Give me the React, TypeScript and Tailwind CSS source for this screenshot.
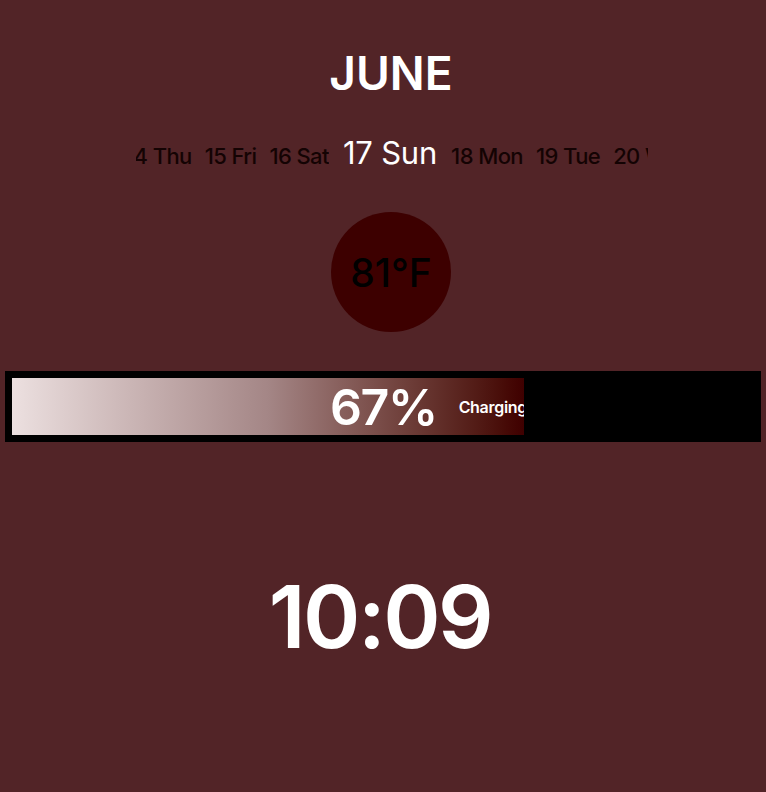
import React from 'react';

const before = [
  { n: 14, d: 'Thu' },
  { n: 15, d: 'Fri' },
  { n: 16, d: 'Sat' },
];

const after = [
  { n: 18, d: 'Mon' },
  { n: 19, d: 'Tue' },
  { n: 20, d: 'Wed' },
];

const Day: React.FC<{ n: number; d: string }> = ({ n, d }) => (
  <span className="text-[22px] leading-none font-medium tracking-[-0.6px] text-[#140303]">
    {n} {d}
  </span>
);

const App: React.FC = () => {
  return (
    <div
      className="min-h-screen w-full bg-[#522427] flex flex-col items-center pt-[50px]"
      style={{ fontFamily: 'Inter, "Noto Sans", sans-serif' }}
    >
      {/* month */}
      <h1 className="ml-[16px] h-[46px] text-[46px] leading-none font-semibold text-white">JUNE</h1>

      {/* day strip, selected day kept in the middle */}
      <div className="mt-[41px] ml-[18px] h-[30px] flex items-baseline gap-[14px] whitespace-nowrap">
        <div className="w-[193px] overflow-hidden flex justify-end items-baseline gap-[13px]">
          {before.map((day) => (
            <Day key={day.n} {...day} />
          ))}
        </div>
        <span className="text-[31px] leading-none tracking-[-0.2px] text-white">17 Sun</span>
        <div className="w-[197px] overflow-hidden flex justify-start items-baseline gap-[13px]">
          {after.map((day) => (
            <Day key={day.n} {...day} />
          ))}
        </div>
      </div>

      {/* temperature */}
      <div className="mt-[45px] ml-[16px] w-[120px] h-[120px] rounded-full bg-[#3d0000] flex items-center justify-center">
        <span className="text-[39px] leading-none font-medium text-black">81°F</span>
      </div>

      {/* battery */}
      <div className="mt-[39px] self-stretch mx-[5px] bg-black p-[7px]">
        <div className="w-[512px] h-[57px] overflow-hidden bg-gradient-to-r from-[#ece0e0] via-[#a48686] to-[#3f0000] flex items-center justify-end">
          <span className="text-[50px] leading-none font-semibold tracking-[-1.5px] text-white">67%</span>
          <span className="ml-[22px] mr-[-3px] text-[16px] leading-none font-semibold tracking-[-0.3px] text-white">
            Charging
          </span>
        </div>
      </div>

      {/* clock */}
      <div className="mt-[131px] mr-[6px] h-[87px] text-[87px] leading-none font-semibold tracking-[-2.5px] text-white">
        10:09
      </div>
    </div>
  );
};

export default App;
